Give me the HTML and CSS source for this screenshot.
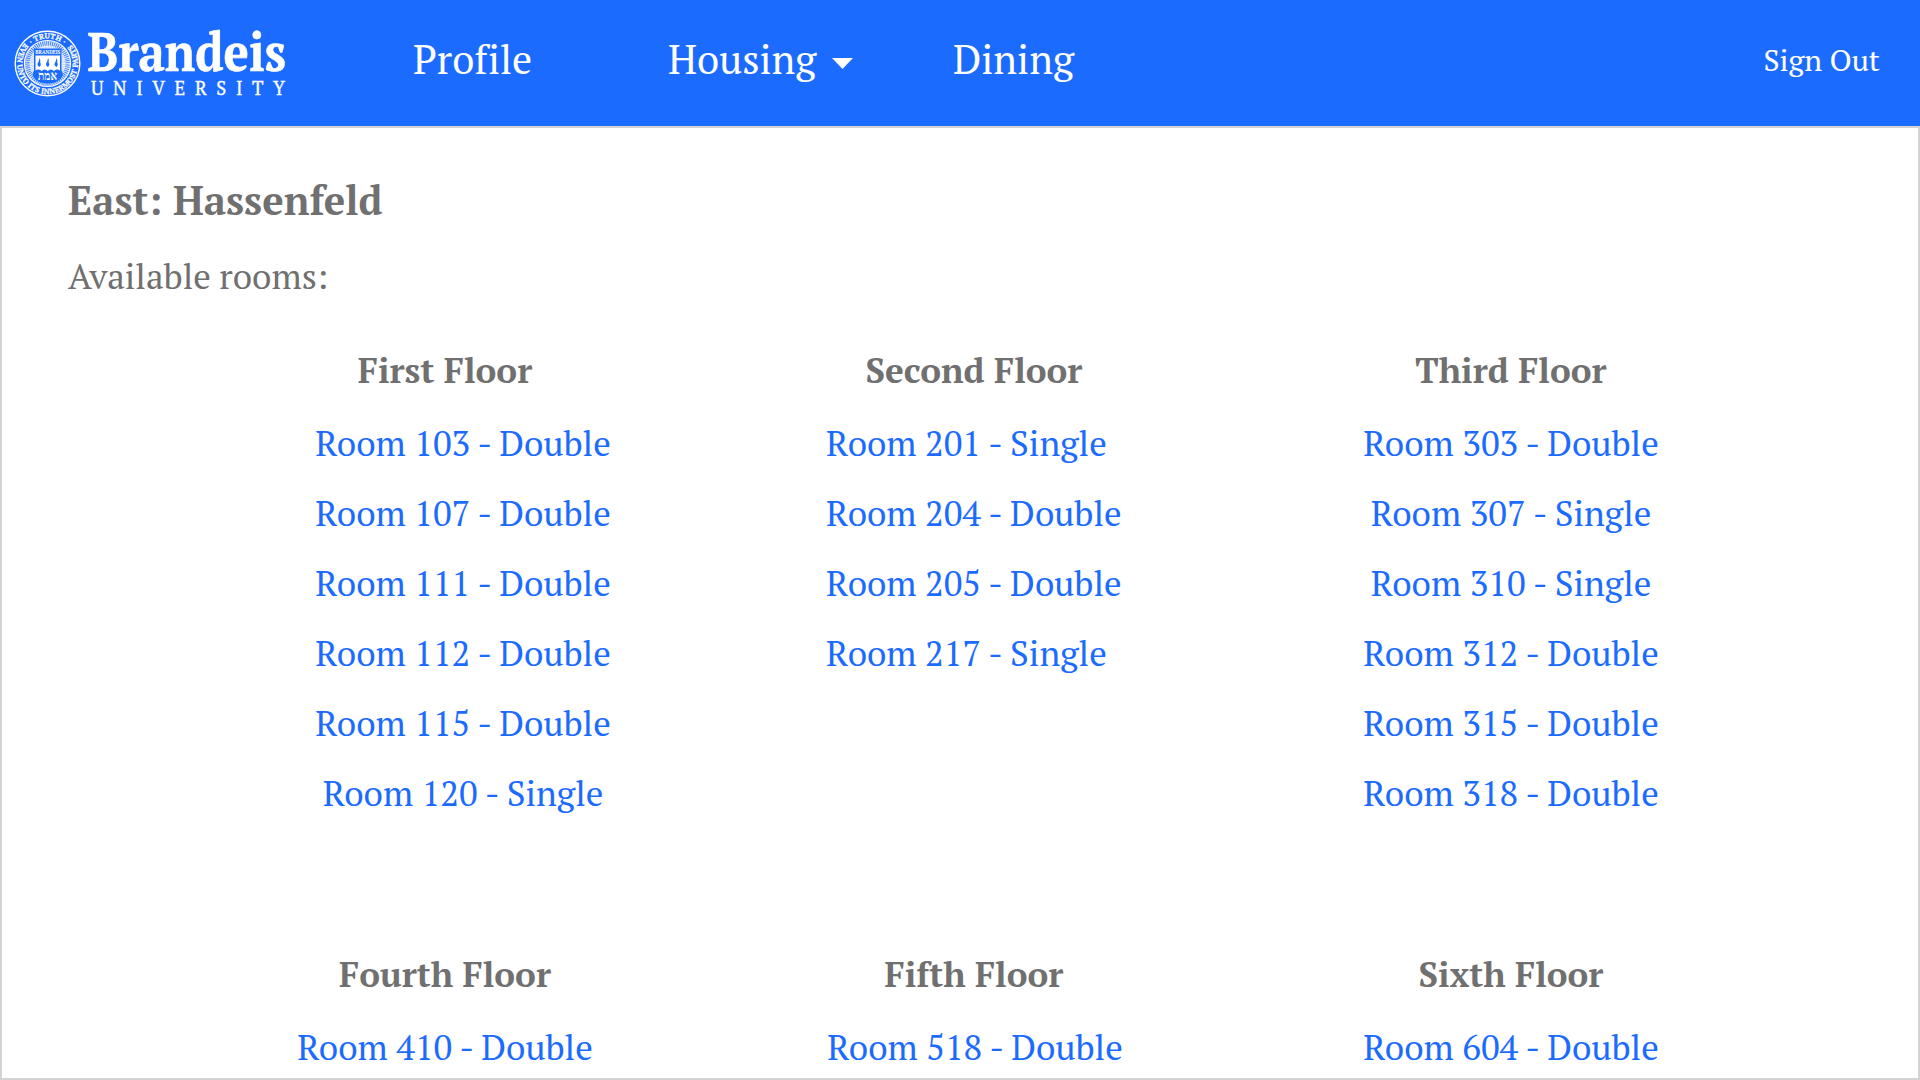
FILE: index.html
```html
<!DOCTYPE html>
<html lang="en">
<head>
<meta charset="utf-8">
<title>East: Hassenfeld</title>
<link rel="stylesheet" href="styles.css">
</head>
<body>
<header class="topbar">
  <svg class="logo" viewBox="0 0 290 126" width="290" height="126" role="img" aria-label="Brandeis University">
    <defs>
      <path id="ring-top" d="M22.500 63.500a25 25 0 0 1 50 0"/>
      <path id="ring-bottom" d="M24.800 43.200A30.500 30.500 0 1 0 70.200 43.200"/>
    </defs>
    <g fill="none" stroke="#fff">
      <circle cx="47.500" cy="63.500" r="32.300" stroke-width="1.400"/>
      <circle cx="47.500" cy="63.500" r="23" stroke-width="1.200"/>
      <circle cx="47.500" cy="63.500" r="17.500" stroke-width="10" stroke-dasharray="1.100 .6" opacity=".8"/>
    </g>
    <circle cx="47.500" cy="63.500" r="18" fill="#fff" opacity=".65"/>
    <text class="seal-text"><textPath href="#ring-top" startOffset="50%" text-anchor="middle">· TRUTH ·</textPath></text>
    <text class="seal-text"><textPath href="#ring-bottom" textLength="138">EVEN UNTO ITS INNERMOST PARTS</textPath></text>
    <path fill="#1c6bff" d="M34 48.500h27.500v22q3 4-1 8.500-5 4.500-12.800 4.500T35 79q-4-4-1-8.500z"/>
    <path fill="#fff" d="M35.500 55.500h24.500v15q-3-2-6 .5-3-3-6.300 0-3-3-6.200 0-3-2.500-6-.5z"/>
    <text class="seal-name" x="35.300" y="54" textLength="25" lengthAdjust="spacingAndGlyphs">BRANDEIS</text>
    <g fill="#1c6bff">
      <path id="flame" d="M39.500 58q1.500 2.500.7 4.500 1.500 2.500-.8 4.500-2.400-1.300-1.900-3.300 1.600-1.700 2-5.700z"/>
      <use href="#flame" x="8.500"/>
      <use href="#flame" x="17"/>
    </g>
    <text class="seal-hebrew" x="38" y="80" textLength="19" lengthAdjust="spacingAndGlyphs">אמת</text>
    <text class="wordmark" x="87.500" y="71" textLength="198.500" lengthAdjust="spacingAndGlyphs">Brandeis</text>
    <text class="wordmark-sub" x="91" y="95" textLength="194">UNIVERSITY</text>
  </svg>
  <nav class="nav">
    <a class="nav-link nav-profile">Profile</a>
    <a class="nav-link nav-housing">Housing<svg class="caret" width="21" height="11" viewBox="0 0 21 11"><path d="M0 0h21L10.500 11z" fill="#fff"/></svg></a>
    <a class="nav-link">Dining</a>
  </nav>
  <a class="sign-out">Sign Out</a>
</header>
<main class="page">
  <h1 class="title">East: Hassenfeld</h1>
  <p class="subtitle">Available rooms:</p>
  <div class="floors">
    <section class="floor floor-first">
      <h2>First Floor</h2>
      <ul><li>Room 103 - Double</li><li>Room 107 - Double</li><li>Room 111 - Double</li><li>Room 112 - Double</li><li>Room 115 - Double</li><li>Room 120 - Single</li></ul>
    </section>
    <section class="floor floor-second">
      <h2>Second Floor</h2>
      <ul><li>Room 201 - Single</li><li>Room 204 - Double</li><li>Room 205 - Double</li><li>Room 217 - Single</li></ul>
    </section>
    <section class="floor">
      <h2>Third Floor</h2>
      <ul><li>Room 303 - Double</li><li>Room 307 - Single</li><li>Room 310 - Single</li><li>Room 312 - Double</li><li>Room 315 - Double</li><li>Room 318 - Double</li></ul>
    </section>
    <section class="floor">
      <h2>Fourth Floor</h2>
      <ul><li>Room 410 - Double</li></ul>
    </section>
    <section class="floor floor-fifth">
      <h2>Fifth Floor</h2>
      <ul><li>Room 518 - Double</li></ul>
    </section>
    <section class="floor">
      <h2>Sixth Floor</h2>
      <ul><li>Room 604 - Double</li></ul>
    </section>
  </div>
</main>
</body>
</html>
```
FILE: styles.css
```css
* { box-sizing: border-box; margin: 0; padding: 0; }
body {
  height: 1080px;
  overflow: hidden;
  display: flex;
  flex-direction: column;
  background: #fff;
  color: #707070;
  font-family: "PT Serif", "Liberation Serif", serif;
  font-size: 35px;
  font-variant-ligatures: none;
}
.topbar {
  flex: 0 0 126px;
  display: flex;
  background: #1c6bff;
  color: #fff;
}
.logo { flex: none; }
.seal-text { font-size: 7.5px; font-weight: 700; fill: #fff; stroke: #fff; stroke-width: .25px; }
.seal-name { font-size: 6px; font-weight: 700; fill: #fff; }
.seal-hebrew { font-size: 13px; font-weight: 700; fill: #fff; }
.wordmark { font-size: 55px; font-weight: 700; fill: #fff; stroke: #fff; stroke-width: .6px; }
.wordmark-sub { font-size: 18.5px; fill: #fff; stroke: #fff; stroke-width: .3px; }
.nav { display: flex; flex: 1; padding-left: 123px; }
.nav-link { font-size: 40px; line-height: 118px; white-space: nowrap; }
.nav-profile { width: 255px; }
.nav-housing { width: 285px; }
.caret { margin-left: 16px; vertical-align: 5px; }
.sign-out { padding-right: 40px; font-size: 30px; line-height: 121px; }
.page {
  flex: 1;
  min-height: 0;
  overflow: hidden;
  border: 2px solid #d3d3d3;
  padding: 47px 66px 0;
}
.title { font-size: 40px; line-height: 50px; }
.subtitle { margin-top: 26px; line-height: 50px; }
.floors {
  display: grid;
  grid-template-columns: 529px 537px 296px;
  row-gap: 111px;
  margin: 34px 0 0 229px;
}
.floor { width: 296px; text-align: center; white-space: nowrap; }
.floor h2 { margin-bottom: 3px; font-size: 35px; line-height: 70px; }
.floor ul { list-style: none; }
.floor li { color: #1c6bff; line-height: 70px; }
.floor-first ul { margin: 0 -18px 0 18px; }
.floor-second ul { text-align: left; }
.floor-fifth ul { margin: 0 -1px 0 1px; }
```
